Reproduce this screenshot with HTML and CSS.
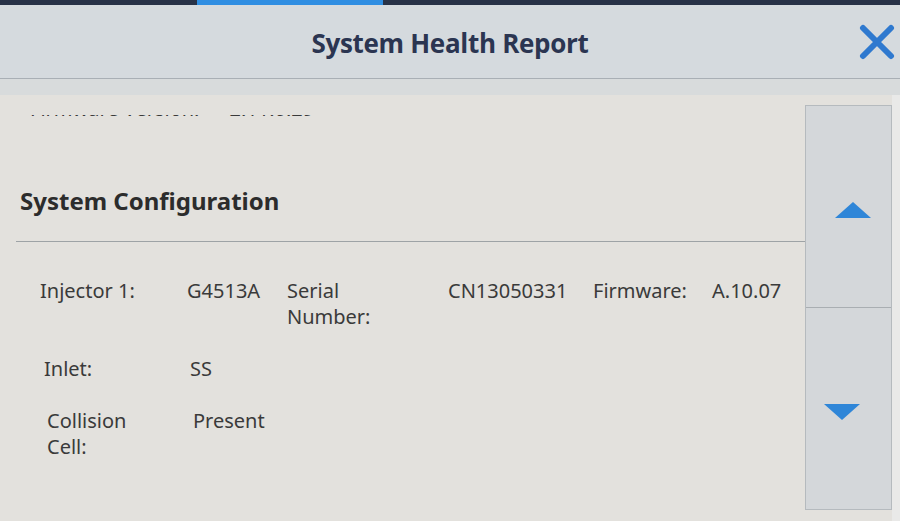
FILE: index.html
```
<!DOCTYPE html>
<html lang="en">
<head>
    <meta charset="UTF-8">
    <meta name="viewport" content="width=device-width, initial-scale=1.0">
    <title>System Health Report</title>
    <link rel="stylesheet" href="styles.css">
</head>
<body>
    <div class="tabstrip">
        <div class="tab"></div>
        <div class="tab tab-active"></div>
        <div class="tab"></div>
    </div>

    <div class="header">
        <div></div>
        <h1>System Health Report</h1>
        <button class="close-btn" aria-label="Close">
            <svg width="38" height="36" viewBox="0 0 38 36">
                <path d="M5 4 L33 32 M33 4 L5 32" stroke="#2f79cf" stroke-width="6" stroke-linecap="round" fill="none"/>
            </svg>
        </button>
    </div>
    <div class="header-band"></div>

    <div class="main">
        <div class="report">
            <div class="report-view">
                <div class="report-scroll">
                    <!-- previous section, scrolled mostly out of view -->
                    <div class="row-prev">
                        <span>Firmware Version:</span>
                        <span>2.11.0.29</span>
                    </div>

                    <h2 class="section-title">System Configuration</h2>

                    <div class="config-grid">
                        <div class="label">Injector 1:</div>
                        <div class="value">G4513A</div>
                        <div class="label label-wrap">Serial Number:</div>
                        <div class="value">CN13050331</div>
                        <div class="label">Firmware:</div>
                        <div class="value">A.10.07</div>

                        <div class="label">Inlet:</div>
                        <div class="value">SS</div>
                        <div class="span4"></div>

                        <div class="label label-wrap">Collision Cell:</div>
                        <div class="value">Present</div>
                        <div class="span4"></div>
                    </div>
                </div>
            </div>
        </div>

        <div class="scrollbar">
            <button class="scroll-btn" aria-label="Scroll up">
                <svg width="38" height="18" viewBox="0 0 38 18"><path d="M19 1 L37 17 L1 17 Z" fill="#2f86d8"/></svg>
            </button>
            <button class="scroll-btn" aria-label="Scroll down">
                <svg width="38" height="18" viewBox="0 0 38 18"><path d="M1 1 L37 1 L19 17 Z" fill="#2f86d8"/></svg>
            </button>
        </div>
        <div class="edge"></div>
    </div>
</body>
</html>
```

FILE: styles.css
```
body { margin: 0; width: 900px; height: 521px; overflow: hidden; font-family: "Noto Sans", "Open Sans", sans-serif; background: #e3e1dd; color: #3a3a3a; }

.tabstrip { display: flex; height: 5px; background: #283247; }
.tab { width: 196px; }
.tab-active { width: 186px; margin-left: 1px; background: #2f8ee2; }

.header { display: grid; grid-template-columns: 1fr auto 1fr; align-items: center; height: 73px; background: #d5dade; border-bottom: 1px solid #a9afb5; }
.header h1 { margin: 0; font-family: "Open Sans", sans-serif; font-weight: 700; font-size: 26px; color: #2b3551; letter-spacing: -0.3px; padding-top: 2px; }
.close-btn { justify-self: end; margin-right: 4px; margin-top: 1px; padding: 0; border: none; background: none; }
.close-btn svg { display: block; }
.header-band { height: 16px; background: #d8dbdc; }

.main { display: flex; height: 426px; }
.report { flex: 1; display: flex; flex-direction: column; padding-top: 20px; }
.report-view { flex: 1; overflow: hidden; }
.report-scroll { margin-top: -19px; padding-left: 16px; width: 789px; }

.row-prev { display: flex; gap: 30px; padding-left: 14px; font-size: 20px; line-height: 26px; }

.section-title { margin: 64px 0 0 0; padding: 0 0 25px 4px; font-size: 24px; font-weight: 700; color: #2c2c2c; line-height: 30px; border-bottom: 1px solid #9ea3a6; }

.config-grid { display: grid; grid-template-columns: 147px 100px 161px 145px 119px 1fr; row-gap: 26px; padding: 36px 0 0 24px; font-size: 20px; line-height: 26px; }
.config-grid .label:nth-child(7) { padding-left: 4px; }
.config-grid .value:nth-child(8) { padding-left: 3px; }
.config-grid .label:nth-child(10) { padding-left: 7px; }
.config-grid .value:nth-child(11) { padding-left: 6px; }
.label-wrap { max-width: 100px; }
.span4 { grid-column: span 4; }

.scrollbar { display: flex; flex-direction: column; width: 86px; margin: 10px 0 11px 0; background: #d4d7da; border: 1px solid #b5babe; }
.scroll-btn { flex: 1; display: flex; align-items: center; justify-content: center; border: none; background: none; padding: 0; }
.scroll-btn:first-child { border-bottom: 1px solid #a9aeb2; padding: 6px 0 0 8px; }
.scroll-btn:last-child { padding: 6px 14px 0 0; }
.edge { width: 8px; background: #e9e9e8; }
```
